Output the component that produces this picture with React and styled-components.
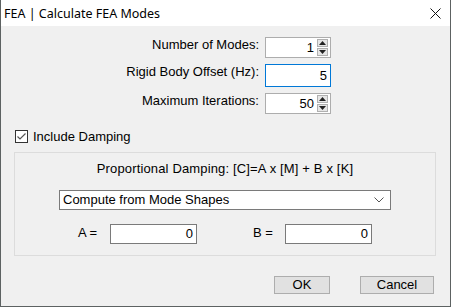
import React from 'react';
import styled, { createGlobalStyle } from 'styled-components';

const GlobalStyle = createGlobalStyle`
  html, body {
    margin: 0;
    padding: 0;
    background: #ffffff;
  }
`;

const App = () => {
  return (
    <>
      <GlobalStyle />
      <Window>
        <TitleBar>
          <Title>FEA | Calculate FEA Modes</Title>
          <CloseIcon viewBox="0 0 11 11">
            <path d="M0.5 0.5 L10.5 10.5 M10.5 0.5 L0.5 10.5" stroke="#111" strokeWidth="1" />
          </CloseIcon>
        </TitleBar>

        <Body>
          <FieldGrid>
            <Label>Number of Modes:</Label>
            <Spinner value="1" />
            <Label>Rigid Body Offset (Hz):</Label>
            <TextBox $focused>5</TextBox>
            <Label>Maximum Iterations:</Label>
            <Spinner value="50" />
          </FieldGrid>

          <CheckRow>
            <CheckBox viewBox="0 0 13 13">
              <rect x="0.5" y="0.5" width="12" height="12" fill="#fff" stroke="#333" />
              <path d="M2.5 6.5 L5 9 L10.5 3.5" fill="none" stroke="#555" strokeWidth="1.2" />
            </CheckBox>
            <span>Include Damping</span>
          </CheckRow>

          <Group>
            <GroupTitle>Proportional Damping: [C]=A x [M] + B x [K]</GroupTitle>
            <Select>
              <span>Compute from Mode Shapes</span>
              <svg width="10" height="6" viewBox="0 0 10 6">
                <path d="M0.5 0.5 L5 5 L9.5 0.5" fill="none" stroke="#555" strokeWidth="1" />
              </svg>
            </Select>
            <CoeffRow>
              <CoeffLabel>A =</CoeffLabel>
              <TextBox $wide>0</TextBox>
              <CoeffLabel $gap>B =</CoeffLabel>
              <TextBox $wide>0</TextBox>
            </CoeffRow>
          </Group>

          <ButtonRow>
            <Button $w={56}>OK</Button>
            <Button $w={74}>Cancel</Button>
          </ButtonRow>
        </Body>
      </Window>
    </>
  );
};

const Spinner = ({ value }) => (
  <SpinBox>
    <SpinValue>{value}</SpinValue>
    <SpinButtons>
      <SpinButton>
        <svg width="7" height="4" viewBox="0 0 7 4"><path d="M0 4 L3.5 0 L7 4 Z" fill="#222" /></svg>
      </SpinButton>
      <SpinButton>
        <svg width="7" height="4" viewBox="0 0 7 4"><path d="M0 0 L3.5 4 L7 0 Z" fill="#222" /></svg>
      </SpinButton>
    </SpinButtons>
  </SpinBox>
);

const Window = styled.div`
  width: 451px;
  height: 307px;
  box-sizing: border-box;
  border: 1px solid #5d6262;
  border-top: none;
  background: #f0f0f0;
  display: flex;
  flex-direction: column;
  font-family: "Liberation Sans", Arial, sans-serif;
  font-size: 13px;
  color: #000;
`;

const TitleBar = styled.div`
  height: 26px;
  background: #ffffff;
  display: flex;
  align-items: center;
  justify-content: space-between;
  padding: 0 9px 0 3px;
`;

const Title = styled.span`
  font-family: "Noto Sans", sans-serif;
  font-size: 12.5px;
  color: #000;
`;

const CloseIcon = styled.svg`
  width: 11px;
  height: 11px;
`;

const Body = styled.div`
  display: flex;
  flex-direction: column;
  padding: 11px 14px 0 13px;
`;

const FieldGrid = styled.div`
  display: grid;
  grid-template-columns: 245px 66px;
  column-gap: 6px;
  row-gap: 6px;
  align-items: start;
`;

const Label = styled.span`
  text-align: right;
  line-height: 16px;
`;

const SpinBox = styled.div`
  height: 21px;
  box-sizing: border-box;
  border: 1px solid #adadad;
  background: #fff;
  display: flex;
  align-items: stretch;
  padding: 1px 2px 1px 0;
`;

const SpinValue = styled.div`
  flex: 1;
  text-align: right;
  padding-right: 3px;
  line-height: 17px;
`;

const SpinButtons = styled.div`
  width: 11px;
  display: flex;
  flex-direction: column;
  gap: 1px;
`;

const SpinButton = styled.div`
  flex: 1;
  background: #e6e6e6;
  border: 1px solid #b0b0b0;
  display: flex;
  align-items: center;
  justify-content: center;
`;

const TextBox = styled.div`
  box-sizing: border-box;
  height: ${(p) => (p.$focused ? '23px' : '20px')};
  width: ${(p) => (p.$wide ? '87px' : '66px')};
  border: 1px solid ${(p) => (p.$focused ? '#0078d7' : '#7a7a7a')};
  background: #fff;
  text-align: right;
  padding-right: 3px;
  line-height: ${(p) => (p.$focused ? '21px' : '18px')};
`;

const CheckRow = styled.label`
  display: flex;
  align-items: center;
  gap: 5px;
  margin-top: 16px;
  margin-left: 1px;
  height: 13px;
`;

const CheckBox = styled.svg`
  width: 13px;
  height: 13px;
`;

const Group = styled.div`
  margin-top: 9px;
  height: 104px;
  box-sizing: border-box;
  border: 1px solid #dcdcdc;
  display: flex;
  flex-direction: column;
  align-items: center;
  padding-top: 8px;
`;

const GroupTitle = styled.div`
  line-height: 16px;
  letter-spacing: 0.15px;
`;

const Select = styled.div`
  margin-top: 13px;
  width: 332px;
  height: 20px;
  box-sizing: border-box;
  border: 1px solid #7a7a7a;
  background: #fff;
  display: flex;
  align-items: center;
  justify-content: space-between;
  padding: 0 6px 0 3px;
  line-height: 16px;
`;

const CoeffRow = styled.div`
  align-self: stretch;
  display: flex;
  align-items: center;
  margin-top: 14px;
  padding-left: 63px;
`;

const CoeffLabel = styled.span`
  width: 32px;
  margin-left: ${(p) => (p.$gap ? '56px' : '0')};
  margin-top: -3px;
`;

const ButtonRow = styled.div`
  display: flex;
  justify-content: flex-end;
  gap: 30px;
  margin-top: 20px;
  padding-right: 2px;
`;

const Button = styled.button`
  width: ${(p) => p.$w}px;
  height: 18px;
  box-sizing: border-box;
  border: 1px solid #adadad;
  background: #e1e1e1;
  font-family: "Liberation Sans", Arial, sans-serif;
  font-size: 13px;
  color: #000;
  padding: 0;
  line-height: 16px;
`;

export default App;
